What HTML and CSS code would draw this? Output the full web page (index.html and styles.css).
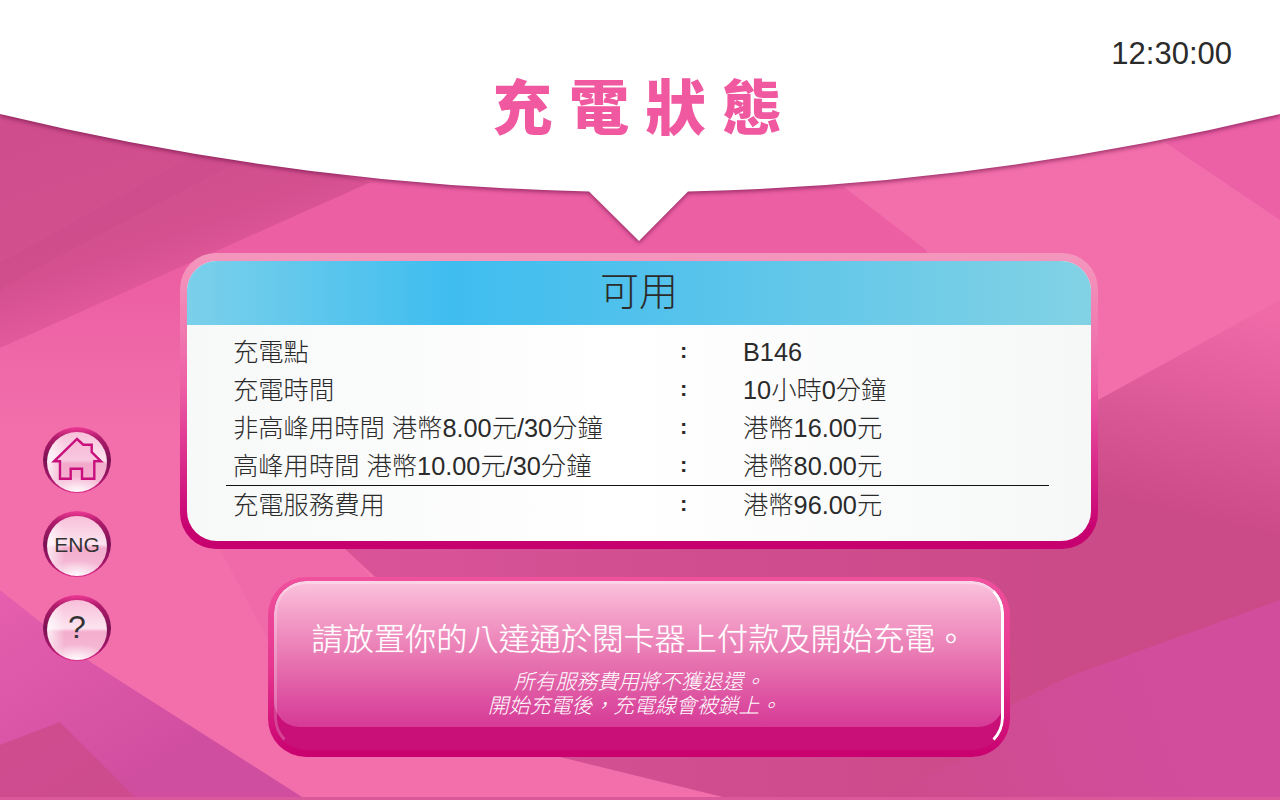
FILE: index.html
```html
<!DOCTYPE html>
<html lang="zh-Hant">
<head>
  <meta charset="UTF-8">
  <title>充電狀態</title>
  <link rel="stylesheet" href="styles.css">
</head>
<body>
  <div class="screen">
    <svg class="backdrop" viewBox="0 0 1280 800" aria-hidden="true">
      <defs>
        <linearGradient id="fadeUpper" gradientUnits="userSpaceOnUse" x1="0" y1="280" x2="0" y2="430">
          <stop offset="0" stop-color="#ec5fa3"/>
          <stop offset="1" stop-color="#f26fab"/>
        </linearGradient>
        <linearGradient id="fadeLeft" gradientUnits="userSpaceOnUse" x1="60" y1="130" x2="130" y2="340">
          <stop offset="0" stop-color="#cf4d8c"/>
          <stop offset="0.6" stop-color="#d4508f"/>
          <stop offset="1" stop-color="#ec5fa3"/>
        </linearGradient>
        <linearGradient id="fadeCentre" x1="0" y1="0" x2="1" y2="0">
          <stop offset="0" stop-color="#da5399"/>
          <stop offset="0.5" stop-color="#d04e90"/>
          <stop offset="1" stop-color="#cb4a88"/>
        </linearGradient>
        <linearGradient id="fadeRight" gradientUnits="userSpaceOnUse" x1="1210" y1="300" x2="1160" y2="510">
          <stop offset="0" stop-color="#f06aa8"/>
          <stop offset="1" stop-color="#cb4a88"/>
        </linearGradient>
        <linearGradient id="fadeCorner" gradientUnits="userSpaceOnUse" x1="880" y1="800" x2="1160" y2="700">
          <stop offset="0" stop-color="#cd4b8c"/>
          <stop offset="1" stop-color="#d24d9c"/>
        </linearGradient>
        <linearGradient id="fadeBottomLeft" gradientUnits="userSpaceOnUse" x1="0" y1="590" x2="120" y2="790">
          <stop offset="0" stop-color="#e65fae"/>
          <stop offset="1" stop-color="#d04ea0"/>
        </linearGradient>
      </defs>
      <rect width="1280" height="800" fill="#f26fab"/>

      <!-- top left -->
      <polygon points="0,100 640,100 640,290 420,290 180,430 0,430" fill="url(#fadeUpper)"/>
      <polygon points="0,100 371,182 212,253 0,348" fill="url(#fadeLeft)"/>
      <polygon points="0,263 204,150 241,160 33,270 0,290" fill="#ca4a89" opacity="0.3"/>

      <!-- top right -->
      <polygon points="640,180 844,187 926,250 950,300 640,300" fill="#ec5fa3"/>
      <polygon points="1166,143 1280,100 1280,220" fill="#ec60a6"/>

      <!-- left of the lower part -->
      <polygon points="220,549 350,549 400,620 268,640" fill="#f06aa9"/>

      <!-- middle and bottom right -->
      <polygon points="1000,400 1098,400 1280,300 1280,800 1000,800" fill="url(#fadeRight)"/>
      <polygon points="345,549 370,500 1050,500 1050,800 735,800 560,757 400,600" fill="url(#fadeCentre)"/>
      <polygon points="1007,707 1068,677 1280,600 1280,800 880,800 960,760" fill="url(#fadeCorner)"/>

      <!-- bottom left -->
      <polygon points="0,590 92,663 302,797 302,800 0,800" fill="url(#fadeBottomLeft)"/>
      <polygon points="0,745 60,722 135,797 135,800 0,800" fill="#cc4b8a" opacity="0.8"/>
      <rect y="797" width="1280" height="3" fill="#d9599b"/>

      <path class="sky" d="M0 0H1280V114Q984 185 688 191.5L639 241L589 191.5Q295 185 0 114Z"/>
    </svg>

    <header class="topbar">
      <div></div>
      <h1 class="title">充電狀態</h1>
      <div class="clock">12:30:00</div>
    </header>

    <main class="layout">
      <nav class="side-nav">
        <button class="round-btn">
          <span class="round-face">
            <svg class="home-icon" viewBox="0 0 58 58">
              <path d="M29 6L35.3 11.7H43.7V19L53 28.3H46.3V45.7H34V35.7H22.7V45.7H12V28.3H6Z"/>
            </svg>
          </span>
        </button>
        <button class="round-btn">
          <span class="round-face eng">ENG</span>
        </button>
        <button class="round-btn">
          <span class="round-face help">?</span>
        </button>
      </nav>

      <div class="content">
        <section class="panel">
          <div class="panel-inner">
            <h2 class="status">可用</h2>
            <div class="fees">
              <div class="fee-row"><span>充電點</span><span class="colon">:</span><span>B146</span></div>
              <div class="fee-row"><span>充電時間</span><span class="colon">:</span><span>10小時0分鐘</span></div>
              <div class="fee-row"><span>非高峰用時間 港幣8.00元/30分鐘</span><span class="colon">:</span><span>港幣16.00元</span></div>
              <div class="fee-row"><span>高峰用時間 港幣10.00元/30分鐘</span><span class="colon">:</span><span>港幣80.00元</span></div>
              <div class="fee-row total"><span>充電服務費用</span><span class="colon">:</span><span>港幣96.00元</span></div>
            </div>
          </div>
        </section>

        <section class="prompt">
          <div class="prompt-face">
            <p class="prompt-main">請放置你的八達通於閱卡器上付款及開始充電。</p>
            <p class="prompt-note">所有服務費用將不獲退還。</p>
            <p class="prompt-note shifted">開始充電後，充電線會被鎖上。</p>
          </div>
        </section>
      </div>
    </main>
  </div>
</body>
</html>
```
FILE: styles.css
```css
* {
  box-sizing: border-box;
}

body {
  margin: 0;
  font-family: "Liberation Sans", "Noto Sans CJK TC", sans-serif;
  color: #2b2b2b;
}

.screen {
  position: relative;
  width: 1280px;
  height: 800px;
  overflow: hidden;
}

.backdrop {
  position: absolute;
  top: 0;
  left: 0;
  width: 1280px;
  height: 800px;
}

.sky {
  fill: #fff;
  filter: drop-shadow(0 2px 2px rgba(110, 15, 70, 0.65));
}

.topbar {
  position: relative;
  height: 253px;
  display: grid;
  grid-template-columns: 1fr auto 1fr;
  align-items: start;
}

.title {
  margin: 67px 0 0;
  padding-left: 11px;
  font-family: "Noto Sans CJK TC", sans-serif;
  font-size: 60px;
  font-weight: 900;
  line-height: 74px;
  letter-spacing: 16.5px;
  color: #f0589f;
}

.clock {
  justify-self: end;
  margin: 36px 48px 0 0;
  font-size: 31px;
  line-height: 36px;
}

.layout {
  position: relative;
  display: grid;
  grid-template-columns: 180px 918px;
}

.side-nav {
  display: flex;
  flex-direction: column;
  gap: 18px;
  padding: 174px 0 0 43px;
}

.round-btn {
  width: 68px;
  height: 66px;
  padding: 3px 0 0;
  border: none;
  border-radius: 50%;
  background: linear-gradient(180deg, #ef3a95 0%, #b01c6c 16%, #7c1254 50%, #a3176a 78%, #e02f8a 100%);
  cursor: pointer;
}

.round-face {
  display: flex;
  align-items: center;
  justify-content: center;
  width: 60px;
  height: 60px;
  margin: 0 auto;
  border-radius: 50%;
  background:
    radial-gradient(ellipse 55% 26% at 50% 100%, #fff 0%, rgba(255, 255, 255, 0) 100%),
    radial-gradient(ellipse 30% 80% at 0% 50%, rgba(255, 255, 255, 0.8) 0%, rgba(255, 255, 255, 0) 100%),
    linear-gradient(180deg, #f8bfd9 0%, #fce4ef 47%, #f3aecd 53%, #f5b9d5 85%);
  color: #333;
  font-family: "Liberation Sans", sans-serif;
}

.eng {
  padding-bottom: 2px;
  font-size: 21px;
}

.help {
  padding-bottom: 4px;
  font-size: 32px;
}

.home-icon {
  width: 58px;
  height: 58px;
}

.home-icon path {
  fill: rgba(243, 160, 200, 0.4);
  stroke: #c80f7c;
  stroke-width: 2.4;
}

.panel {
  height: 296px;
  padding: 8px 7px;
  border-radius: 36px;
  background: linear-gradient(180deg, #f497bd 0%, #f28cb8 12%, #ed5fa5 45%, #d9288a 72%, #c6006f 94%);
}

.panel-inner {
  height: 100%;
  overflow: hidden;
  border-radius: 30px;
  background: linear-gradient(90deg, #f7f8f8 0%, #fff 48%, #f6f7f7 100%);
}

.status {
  height: 64px;
  margin: 0;
  font-size: 39px;
  font-weight: 300;
  line-height: 62px;
  text-align: center;
  background: linear-gradient(90deg, #7bd0ea 0%, #3fbdef 29%, #53c2ec 52%, #82d2e4 100%);
}

.fees {
  padding: 8px 42px 0 39px;
}

.fee-row {
  display: grid;
  grid-template-columns: 447px 63px 1fr;
  height: 38px;
  padding-left: 7px;
  font-size: 25.3px;
  font-weight: 300;
  line-height: 38px;
  white-space: nowrap;
}

.total {
  height: 39px;
  border-top: 1px solid #111;
}

.colon {
  font-size: 22px;
  font-weight: 700;
  line-height: 36px;
}

.content {
  display: flex;
  flex-direction: column;
  gap: 28px;
}

.prompt {
  width: 742px;
  height: 180px;
  margin-left: 88px;
  padding: 4px 6px 7px;
  border-radius: 38px;
  background: linear-gradient(180deg, #f0519d 0%, #e6368f 50%, #c8006f 100%);
}

.prompt-face {
  position: relative;
  height: 100%;
  overflow: hidden;
  padding-top: 37px;
  border-radius: 32px;
  background: #c90f78;
  text-align: center;
  color: #fff;
}

.prompt-face::before {
  content: "";
  position: absolute;
  top: 0;
  right: 0;
  bottom: 23px;
  left: 0;
  border-radius: 32px 32px 26px 26px;
  background: linear-gradient(180deg, #fac4de 0%, #f5a4cb 20%, #e97ab4 50%, #de55a2 78%, #d63a97 100%);
}

.prompt-face::after {
  content: "";
  position: absolute;
  top: 0;
  right: 0;
  bottom: 0;
  left: 0;
  border-radius: 32px;
  border: 3px solid transparent;
  border-top-color: rgba(255, 255, 255, 0.3);
  border-left-color: rgba(255, 255, 255, 0.22);
  border-right-color: #fff;
}

.prompt-main,
.prompt-note {
  position: relative;
  margin: 0;
}

.prompt-main {
  margin-bottom: 8px;
  font-size: 31.2px;
  font-weight: 300;
  line-height: 44px;
  text-shadow: 0 0 1px rgba(255, 255, 255, 0.6);
}

.prompt-note {
  font-size: 20.9px;
  line-height: 24px;
  font-style: italic;
  font-weight: 300;
}

.shifted {
  padding-right: 10px;
}
```
